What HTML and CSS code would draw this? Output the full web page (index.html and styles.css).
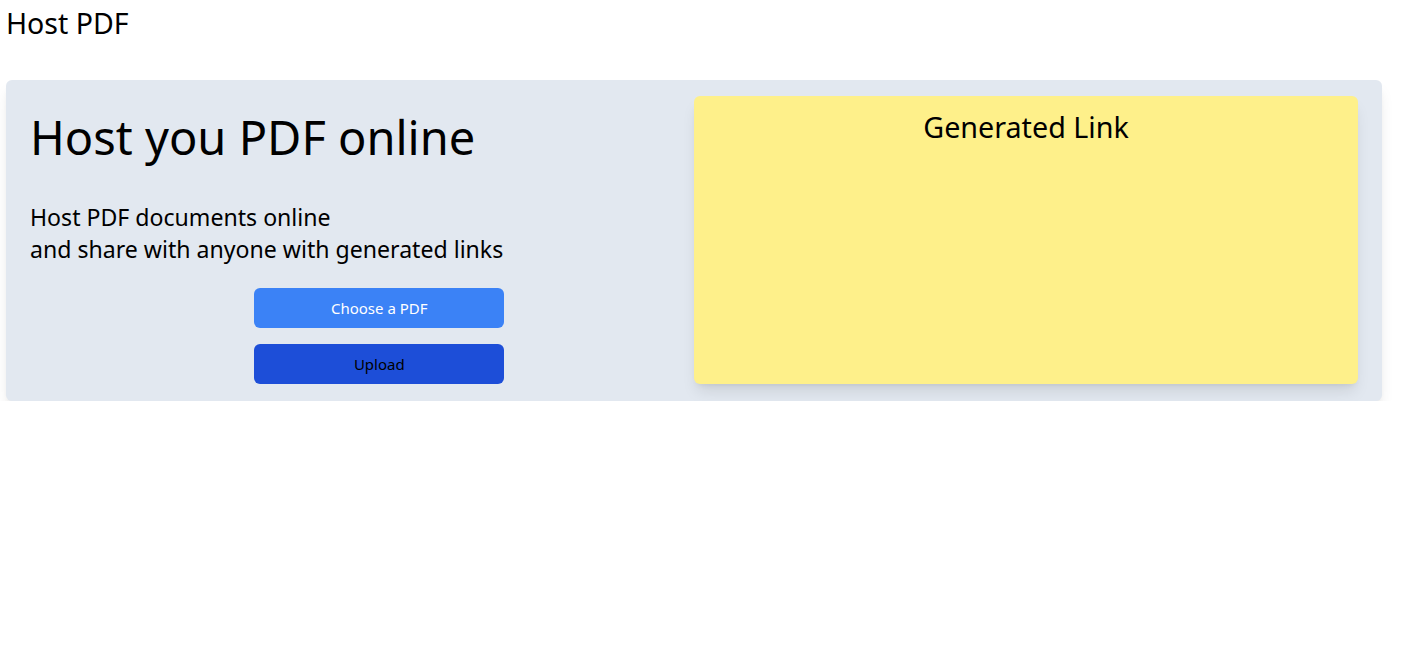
FILE: index.html
```html
<!DOCTYPE html>
<html>
<head>
<meta charset="utf-8">
<link rel="stylesheet" href="styles.css">
</head>
<body>
<header class="topbar">Host PDF</header>
<main class="card">
  <section class="intro">
    <div class="intro-inner">
      <h1 class="title">Host you PDF online</h1>
      <p class="lead">Host PDF documents online<br>and share with anyone with generated links</p>
      <div class="actions">
        <button class="btn btn-choose">Choose a PDF</button>
        <button class="btn btn-upload">Upload</button>
      </div>
    </div>
  </section>
  <section class="result">
    <h2 class="result-title">Generated Link</h2>
  </section>
</main>
</body>
</html>
```
FILE: styles.css
```css
* { box-sizing: border-box; }
html, body { margin: 0; padding: 0; background: #fff; }
body {
  font-family: "Noto Sans", "Open Sans", sans-serif;
  color: #000;
  padding: 0 28px 0 6px;
}
.topbar {
  font-size: 28.5px;
  line-height: 32px;
  padding: 7px 0 0 0;
  height: 80px;
}
.card {
  display: grid;
  grid-template-columns: 1fr 1fr;
  background: #e2e8f0;
  border-radius: 6px;
  padding: 16px 24px 17px 24px;
  box-shadow: 0 10px 15px -3px rgba(0,0,0,0.1), 0 4px 6px -4px rgba(0,0,0,0.1);
}
.intro { display: flex; }
.intro-inner { display: flex; flex-direction: column; align-items: flex-end; }
.title {
  align-self: flex-start;
  font-size: 47px;
  font-weight: 400;
  line-height: 1;
  margin: 18px 0 0 0;
}
.lead {
  align-self: flex-start;
  font-size: 23.1px;
  line-height: 32px;
  margin: 40px 0 0 0;
  padding-right: 1px;
}
.actions { display: flex; flex-direction: column; gap: 16px; margin-top: 23px; }
.btn {
  width: 250px;
  height: 40px;
  border: 0;
  border-radius: 6px;
  font-family: inherit;
  font-size: 15px;
}
.btn-choose { background: #3b82f6; color: #fff; }
.btn-upload { background: #1d4ed8; color: #000; }
.result {
  background: #fef08a;
  border-radius: 6px;
  box-shadow: 0 10px 15px -3px rgba(0,0,0,0.1), 0 4px 6px -4px rgba(0,0,0,0.1);
  text-align: center;
  padding-top: 13px;
}
.result-title {
  font-size: 28.7px;
  font-weight: 400;
  line-height: 36px;
  margin: 0;
}
```
